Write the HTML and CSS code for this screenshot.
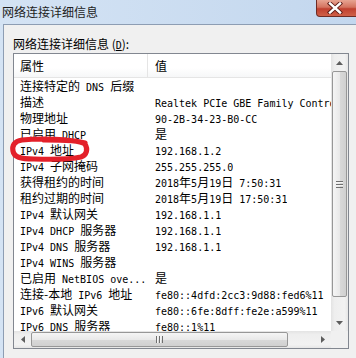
FILE: index.html
```html
<!DOCTYPE html>
<html lang="zh-CN">
<head>
    <meta charset="UTF-8">
    <title>网络连接详细信息</title>
    <link rel="stylesheet" href="styles.css">
</head>
<body>
<div class="window">
    <div class="titlebar">
        <span class="title">网络连接详细信息</span>
        <div class="close">
            <svg width="16" height="12" viewBox="0 0 16 12">
                <path d="M3 1.5 L13 10.5 M13 1.5 L3 10.5" stroke="#5a1a14" stroke-width="4.2" stroke-linecap="square"/>
                <path d="M3 1.5 L13 10.5 M13 1.5 L3 10.5" stroke="#ffffff" stroke-width="2.4" stroke-linecap="square"/>
            </svg>
        </div>
    </div>

    <div class="frame">
        <div class="panel">
            <div class="label">网络连接详细信息 (<u class="m">D</u>):</div>

            <!-- 列表框 -->
            <div class="listbox">
                <div class="view">
                    <div class="header">
                        <div class="c1">属性</div>
                        <div class="c2">值</div>
                    </div>
                    <div class="row"><div class="c1">连接特定的<span class="m"> DNS </span>后缀</div><div class="c2"></div></div>
                    <div class="row"><div class="c1">描述</div><div class="c2"><span class="m">Realtek PCIe GBE Family Controller</span></div></div>
                    <div class="row"><div class="c1">物理地址</div><div class="c2"><span class="m">90-2B-34-23-B0-CC</span></div></div>
                    <div class="row"><div class="c1">已启用<span class="m"> DHCP</span></div><div class="c2">是</div></div>
                    <div class="row"><div class="c1"><span class="m">IPv4 </span>地址</div><div class="c2"><span class="m">192.168.1.2</span></div></div>
                    <div class="row"><div class="c1"><span class="m">IPv4 </span>子网掩码</div><div class="c2"><span class="m">255.255.255.0</span></div></div>
                    <div class="row"><div class="c1">获得租约的时间</div><div class="c2"><span class="m">2018</span>年<span class="m">5</span>月<span class="m">19</span>日<span class="m"> 7:50:31</span></div></div>
                    <div class="row"><div class="c1">租约过期的时间</div><div class="c2"><span class="m">2018</span>年<span class="m">5</span>月<span class="m">19</span>日<span class="m"> 17:50:31</span></div></div>
                    <div class="row"><div class="c1"><span class="m">IPv4 </span>默认网关</div><div class="c2"><span class="m">192.168.1.1</span></div></div>
                    <div class="row"><div class="c1"><span class="m">IPv4 DHCP </span>服务器</div><div class="c2"><span class="m">192.168.1.1</span></div></div>
                    <div class="row"><div class="c1"><span class="m">IPv4 DNS </span>服务器</div><div class="c2"><span class="m">192.168.1.1</span></div></div>
                    <div class="row"><div class="c1"><span class="m">IPv4 WINS </span>服务器</div><div class="c2"></div></div>
                    <div class="row"><div class="c1">已启用<span class="m"> NetBIOS ove...</span></div><div class="c2">是</div></div>
                    <div class="row"><div class="c1">连接-本地<span class="m"> IPv6 </span>地址</div><div class="c2"><span class="m">fe80::4dfd:2cc3:9d88:fed6%11</span></div></div>
                    <div class="row"><div class="c1"><span class="m">IPv6 </span>默认网关</div><div class="c2"><span class="m">fe80::6fe:8dff:fe2e:a599%11</span></div></div>
                    <div class="row"><div class="c1"><span class="m">IPv6 DNS </span>服务器</div><div class="c2"><span class="m">fe80::1%11</span></div></div>
                </div>

                <!-- 垂直滚动条 -->
                <div class="vscroll">
                    <div class="sbtn"><svg width="7" height="4" viewBox="0 0 7 4"><polygon points="3.5,0 7,4 0,4" fill="#5d5d5d"/></svg></div>
                    <div class="vthumb"><span class="grip-h"></span></div>
                    <div class="strack"></div>
                    <div class="sbtn"><svg width="7" height="4" viewBox="0 0 7 4"><polygon points="0,0 7,0 3.5,4" fill="#5d5d5d"/></svg></div>
                </div>

                <!-- 水平滚动条 -->
                <div class="hscroll">
                    <div class="sbtn"><svg width="4" height="7" viewBox="0 0 4 7"><polygon points="0,3.5 4,0 4,7" fill="#5d5d5d"/></svg></div>
                    <div class="hthumb"><span class="grip-v"></span></div>
                    <div class="strack"></div>
                    <div class="sbtn"><svg width="4" height="7" viewBox="0 0 4 7"><polygon points="0,0 4,3.5 0,7" fill="#5d5d5d"/></svg></div>
                </div>
                <div class="corner"></div>
            </div>
        </div>
    </div>

    <!-- 红色圈注 -->
    <svg class="mark" width="356" height="358" viewBox="0 0 356 358">
        <path d="M85 143 C70 139 40 138 22 140 C14 141 12 146 13 151 C14 157 20 159 34 159 C50 159.5 72 159 81 157 C87 155 88 149 85 144 C80 140 60 140 44 140"
              fill="none" stroke="#e3202a" stroke-width="5.2" stroke-linecap="round"/>
    </svg>
</div>
</body>
</html>
```

FILE: styles.css
```css
* {
    box-sizing: border-box;
    margin: 0;
    padding: 0;
}

body {
    width: 356px;
    height: 358px;
    overflow: hidden;
    font-family: "Noto Sans CJK SC", sans-serif;
    font-size: 12px;
    color: #000;
}

.window {
    position: relative;
    width: 356px;
    height: 358px;
    overflow: hidden;
    background: linear-gradient(to right, #d4e3f4, #c3d7ee);
}

.m {
    font-family: "DejaVu Sans Mono", monospace;
    font-size: 10px;
}

/* 标题栏 */
.titlebar {
    height: 24px;
    display: flex;
    align-items: center;
    padding-left: 2px;
}

.title {
    font-size: 12px;
    line-height: 16px;
    color: #1e1e1e;
}

.close {
    margin-left: auto;
    margin-right: -4px;
    align-self: flex-start;
    width: 44px;
    height: 17px;
    border: 1px solid #6e2b24;
    border-top: none;
    border-radius: 0 0 4px 4px;
    background: linear-gradient(to bottom, #e7a492 0%, #d4735f 45%, #c0402f 55%, #cf6048 100%);
    display: flex;
    justify-content: center;
    align-items: center;
    padding-right: 6px;
}

/* 主面板 */
.frame {
    height: 334px;
    padding-left: 3px;
    display: flex;
}

.panel {
    flex: 1;
    background: #f0f0f0;
    border-left: 1px solid #8d9db3;
    border-top: 1px solid #8d9db3;
    padding: 11px 0 0 9px;
}

.label {
    height: 16px;
    line-height: 16px;
}

.listbox {
    margin-top: 1px;
    width: 336px;
    height: 296px;
    border: 1px solid #828790;
    background: #fff;
    display: grid;
    grid-template-columns: 317px 17px;
    grid-template-rows: 277px 17px;
}

.view {
    overflow: hidden;
    white-space: nowrap;
}

.header {
    display: flex;
    height: 24px;
    line-height: 23px;
    border-bottom: 1px solid #e5e5e5;
    background: linear-gradient(to bottom, #ffffff 0%, #ffffff 60%, #f6f7f8 100%);
}

.header .c1 {
    border-right: 1px solid #e5e5e5;
}

.row {
    display: flex;
    height: 16px;
    line-height: 16px;
}

.c1 {
    width: 134px;
    flex-shrink: 0;
    padding-left: 6px;
    overflow: hidden;
}

.c2 {
    padding-left: 7px;
    overflow: hidden;
}

/* 滚动条 */
.vscroll {
    display: flex;
    flex-direction: column;
    background: linear-gradient(to right, #e3e3e3, #eeeeee 20%, #f2f2f2 80%, #e6e6e6);
}

.hscroll {
    display: flex;
    background: linear-gradient(to bottom, #e3e3e3, #eeeeee 20%, #f2f2f2 80%, #e6e6e6);
}

.sbtn {
    width: 17px;
    height: 17px;
    flex-shrink: 0;
    display: flex;
    justify-content: center;
    align-items: center;
}

.strack {
    flex: 1;
}

.vthumb {
    height: 226px;
    margin: 0 1px;
    border: 1px solid #979797;
    border-radius: 2px;
    background: linear-gradient(to right, #f5f5f5, #e9e9e9 50%, #d9d9d9 51%, #d0d0d0);
    display: flex;
    justify-content: center;
    align-items: center;
}

.hthumb {
    width: 257px;
    margin: 1px 0;
    border: 1px solid #979797;
    border-radius: 2px;
    background: linear-gradient(to bottom, #f5f5f5, #e9e9e9 50%, #d9d9d9 51%, #d0d0d0);
    display: flex;
    justify-content: center;
    align-items: center;
}

.grip-h {
    width: 7px;
    height: 7px;
    background: repeating-linear-gradient(to bottom, #6f6f6f 0, #6f6f6f 1px, #f4f4f4 1px, #f4f4f4 2px, transparent 2px, transparent 3px);
}

.grip-v {
    width: 7px;
    height: 7px;
    background: repeating-linear-gradient(to right, #6f6f6f 0, #6f6f6f 1px, #f4f4f4 1px, #f4f4f4 2px, transparent 2px, transparent 3px);
}

.corner {
    background: #f0f0f0;
}

/* 红色圈注 */
.mark {
    position: absolute;
    left: 0;
    top: 0;
    pointer-events: none;
}
```
